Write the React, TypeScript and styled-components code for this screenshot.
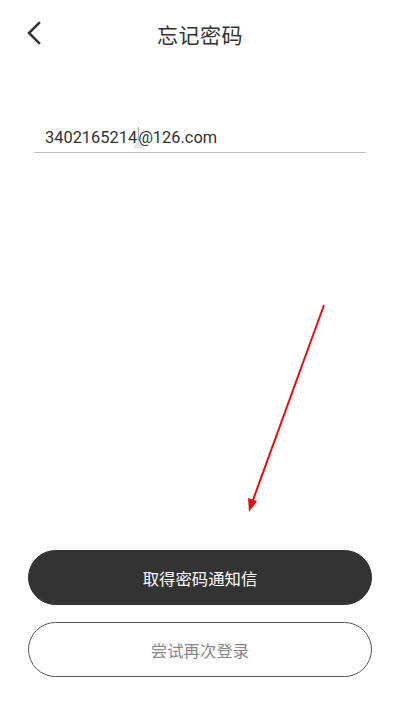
import { createGlobalStyle } from 'styled-components';
import styled from 'styled-components';

const GlobalStyle = createGlobalStyle`
  html, body {
    margin: 0;
    padding: 0;
    background: #fff;
  }
  body {
    font-family: Roboto, "Noto Sans CJK SC", sans-serif;
    color: #333;
  }
`;

const Page = styled.div`
  position: relative;
  display: flex;
  flex-direction: column;
  width: 400px;
  height: 711px;
  overflow: hidden;
  background: #fff;
`;

const Header = styled.header`
  position: relative;
  display: flex;
  align-items: center;
  justify-content: center;
  height: 68px;
`;

const BackButton = styled.button`
  position: absolute;
  left: 20px;
  top: 16px;
  display: flex;
  align-items: center;
  justify-content: center;
  width: 28px;
  height: 34px;
  padding: 0;
  border: none;
  background: none;
  cursor: pointer;
`;

const Title = styled.h1`
  margin: 0;
  font-family: "Noto Sans CJK SC", sans-serif;
  font-size: 21px;
  font-weight: 400;
  color: #333;
  letter-spacing: 0.5px;
`;

const Field = styled.div`
  display: flex;
  align-items: center;
  height: 30px;
  margin: 54px 34px 0;
  padding-left: 11px;
  border-bottom: 1px solid #bdbdbd;
  font-family: Roboto, sans-serif;
  font-size: 16.4px;
  color: #333;
`;

const Caret = styled.span`
  position: relative;
  display: inline-block;
  width: 0;
  height: 20px;
  margin-left: 1px;

  &::before {
    content: '';
    position: absolute;
    left: 0;
    top: 0;
    width: 1px;
    height: 19px;
    background: #aaa;
  }

  &::after {
    content: '';
    position: absolute;
    left: -5px;
    top: 13px;
    width: 0;
    height: 0;
    border-left: 5px solid transparent;
    border-right: 5px solid transparent;
    border-bottom: 8px solid #e4e4e4;
  }
`;

const Spacer = styled.div`
  flex: 1;
`;

const Actions = styled.div`
  display: flex;
  flex-direction: column;
  gap: 17px;
  padding: 0 28px 34px;
`;

const PillButton = styled.button<{ $filled?: boolean }>`
  height: 55px;
  border-radius: 28px;
  border: 1px solid ${(p) => (p.$filled ? '#333' : '#555')};
  background: ${(p) => (p.$filled ? '#333' : '#fff')};
  color: ${(p) => (p.$filled ? '#fff' : '#888')};
  font-family: "Noto Sans CJK SC", sans-serif;
  font-size: 16.4px;
  cursor: pointer;
`;

const Annotation = styled.svg`
  position: absolute;
  left: 0;
  top: 0;
  pointer-events: none;
`;

const App = () => {
  return (
    <Page>
      <GlobalStyle />
      <Header>
        <BackButton aria-label="返回">
          <svg width="16" height="24" viewBox="0 0 16 24">
            <polyline
              points="13,2 3,12 13,22"
              fill="none"
              stroke="#333"
              strokeWidth="2.6"
              strokeLinecap="square"
            />
          </svg>
        </BackButton>
        <Title>忘记密码</Title>
      </Header>
      <Field>
        <span>3402165214</span>
        <Caret />
        <span>@126.com</span>
      </Field>
      <Spacer />
      <Actions>
        <PillButton $filled>取得密码通知信</PillButton>
        <PillButton>尝试再次登录</PillButton>
      </Actions>
      <Annotation width="400" height="711" viewBox="0 0 400 711">
        <line x1="324" y1="305" x2="253" y2="500" stroke="#e31010" strokeWidth="2" />
        <polygon points="249,512 248,498 257,501" fill="#e31010" />
      </Annotation>
    </Page>
  );
};

export default App;
